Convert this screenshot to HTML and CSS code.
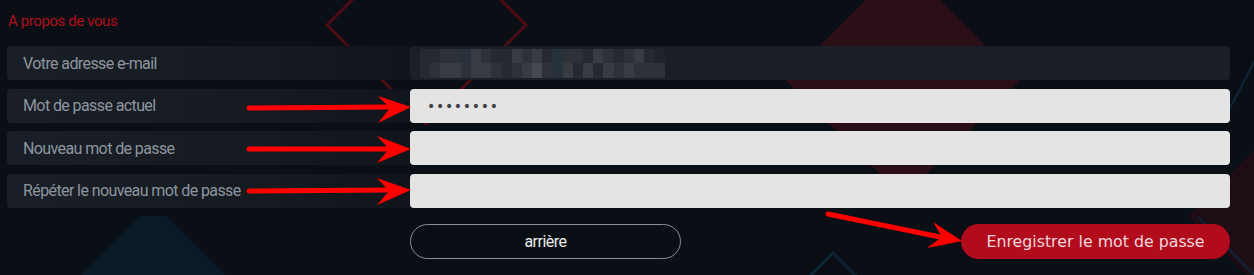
FILE: index.html
```
<!DOCTYPE html>
<html lang="fr">
<head>
    <meta charset="UTF-8">
    <title>Mot de passe</title>
    <link rel="stylesheet" href="styles.css">
</head>
<body>
    <svg class="backdrop" width="1254" height="275" viewBox="0 0 1254 275">
        <polygon points="426,-74 526,25 426,124 327,25" fill="none" stroke="#4c0c16" stroke-width="3"/>
        <polygon points="903,-37 1020,80 903,197 786,80" fill="#2c0e17"/>
        <polygon points="140,216 166,216 225,275 81,275" fill="#0a1a28"/>
        <polyline points="795,291 833,253 871,291" fill="none" stroke="#0e2435" stroke-width="3"/>
        <polygon points="1254,150 1188,216 1254,282" fill="#1d0d15"/>
        <line x1="1254" y1="62" x2="1230" y2="108" stroke="#0e2638" stroke-width="2"/>
        <line x1="1198" y1="217" x2="1256" y2="277" stroke="#0e2638" stroke-width="2"/>
    </svg>

    <div class="page">
        <h3 class="section-title">A propos de vous</h3>

        <div class="form">
            <div class="field-label">Votre adresse e-mail</div>
            <div class="field field-dark">
                <div class="pixels">
                    <span class="s1"></span><span class="s1"></span><span class="s2"></span><span class="s2"></span><span class="s5"></span><span class="s3"></span><span class="s2"></span><span class="s1"></span><span class="s1"></span><span class="s3"></span><span class="s2"></span><span class="s3"></span><span class="s1"></span><span class="s5"></span><span class="s2"></span><span class="s2"></span><span class="s1"></span><span class="s3"></span><span class="s2"></span><span class="s1"></span><span class="s2"></span><span class="s3"></span><span class="s1"></span><span class="s0"></span>
                    <span class="s1"></span><span class="s2"></span><span class="s3"></span><span class="s3"></span><span class="s2"></span><span class="s3"></span><span class="s3"></span><span class="s2"></span><span class="s1"></span><span class="s2"></span><span class="s3"></span><span class="s4"></span><span class="s2"></span><span class="s5"></span><span class="s3"></span><span class="s1"></span><span class="s3"></span><span class="s1"></span><span class="s3"></span><span class="s2"></span><span class="s3"></span><span class="s2"></span><span class="s2"></span><span class="s2"></span>
                </div>
            </div>

            <div class="field-label">Mot de passe actuel</div>
            <div class="field"><span class="dots">&bull;&bull;&bull;&bull;&bull;&bull;&bull;&bull;</span></div>

            <div class="field-label">Nouveau mot de passe</div>
            <div class="field"></div>

            <div class="field-label">Répéter le nouveau mot de passe</div>
            <div class="field"></div>
        </div>

        <div class="actions">
            <a href="#" class="btn btn-back">arrière</a>
            <a href="#" class="btn btn-save">Enregistrer le mot de passe</a>
        </div>
    </div>

    <!-- annotation arrows -->
    <svg class="arrows" width="1254" height="275" viewBox="0 0 1254 275">
        <g stroke="#ff0000" stroke-width="5" stroke-linecap="round" fill="#ff0000">
            <line x1="249" y1="108" x2="390" y2="107"/>
            <line x1="249" y1="149" x2="390" y2="149"/>
            <line x1="249" y1="191" x2="390" y2="190"/>
            <line x1="828" y1="214" x2="945" y2="238"/>
        </g>
        <g fill="#ff0000">
            <polygon points="378,96 411,107 378,123 390,108"/>
            <polygon points="377,136 411,149 377,163 389,149"/>
            <polygon points="377,178 411,190 377,205 389,191"/>
            <polygon points="933,222 962,241 927,248 942,237"/>
        </g>
    </svg>
</body>
</html>
```

FILE: styles.css
```
body {
    background-color: #0a0f16;
    margin: 0;
    padding: 0;
    font-family: Roboto, "Liberation Sans", sans-serif;
    overflow: hidden;
}
.backdrop,
.arrows {
    position: absolute;
    left: 0;
    top: 0;
}
.arrows {
    z-index: 5;
    pointer-events: none;
}
.page {
    position: relative;
    z-index: 1;
    width: 1223px;
    padding: 10px 0 0 7px;
}
.section-title {
    margin: 0 0 14px 1px;
    font-size: 15px;
    font-weight: normal;
    line-height: 22px;
    color: #b20d1b;
    letter-spacing: -0.4px;
}
.form {
    display: grid;
    grid-template-columns: 403px 820px;
    grid-auto-rows: 34px;
    row-gap: 8.5px;
}
.field-label {
    display: flex;
    align-items: center;
    padding-left: 16px;
    font-size: 16px;
    color: #8d959f;
    letter-spacing: -0.6px;
    background-image: linear-gradient(90deg, #1a1f27, #161b22 60%, #10151c);
    border-radius: 4px 0 0 4px;
}
.field {
    display: flex;
    align-items: center;
    background-color: #e4e4e4;
    border-radius: 4px;
}
.field-dark {
    background-color: #1a1f28;
}
.pixels {
    display: grid;
    grid-template-columns: repeat(24, 10.2px);
    grid-template-rows: 14px 15px;
    margin-left: 10px;
}
.s0 { background-color: #1d222b; }
.s1 { background-color: #252a32; }
.s2 { background-color: #2d3239; }
.s3 { background-color: #373b42; }
.s4 { background-color: #46494f; }
.s5 { background-color: #27313c; }
.dots {
    margin-left: 17px;
    font-family: "DejaVu Sans", sans-serif;
    font-size: 14px;
    letter-spacing: 0.7px;
    color: #3d4148;
}
.actions {
    display: flex;
    justify-content: space-between;
    margin: 16px 0 0 403px;
}
.btn {
    display: flex;
    align-items: center;
    justify-content: center;
    height: 35px;
    box-sizing: border-box;
    border-radius: 18px;
    text-decoration: none;
}
.btn-back {
    width: 271px;
    border: 1px solid #8a8d92;
    color: #ecebea;
    font-size: 16px;
    letter-spacing: -0.5px;
}
.btn-save {
    width: 269px;
    background-color: #b20c1c;
    color: #f1d7de;
    font-family: "DejaVu Sans", sans-serif;
    font-size: 15.8px;
}
```
